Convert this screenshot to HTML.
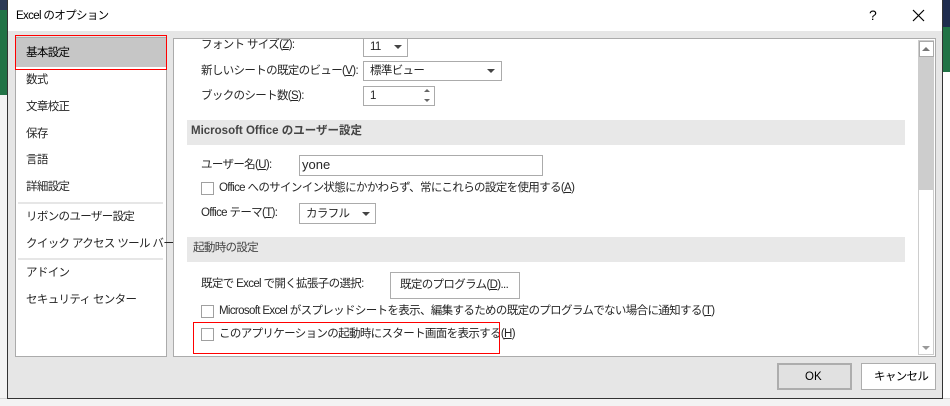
<!DOCTYPE html>
<html><head><meta charset="utf-8"><style>
*{margin:0;padding:0;box-sizing:border-box}
body{width:950px;height:406px;overflow:hidden;background:#fff;position:relative;font-family:"Liberation Sans","Noto Sans CJK JP",sans-serif;font-size:11.5px;letter-spacing:-0.65px;color:#262626}
.a{position:absolute;white-space:nowrap}
.t{line-height:16px;top:0}
.cb{position:absolute;width:13px;height:13px;border:1px solid #a0a0a0;background:#fff}
.box{position:absolute;border:1px solid #ababab;background:#fff}
.arr{position:absolute;width:0;height:0;border-left:4px solid transparent;border-right:4px solid transparent;border-top:4px solid #444}
.r{position:absolute;background:#ff0000;z-index:5}
u{text-decoration:underline}
</style></head><body>
<div class="a" style="left:0;top:0;width:8px;height:10px;background:#2b3a55"></div>
<div class="a" style="left:0;top:10px;width:8px;height:85px;background:#217346"></div>
<div class="a" style="left:0;top:95px;width:8px;height:311px;background:#f3f3f3"></div>
<div class="a" style="left:942px;top:0;width:8px;height:27px;background:#1f2d4e"></div>
<div class="a" style="left:942px;top:27px;width:8px;height:45px;background:#217346"></div>
<div class="a" style="left:942px;top:72px;width:8px;height:334px;background:#fff"></div>
<div class="a" style="left:0;top:398px;width:950px;height:8px;background:#f3f3f3;border-top:1px solid #d4d4d4"></div>
<div class="a" style="left:7px;top:0;width:936px;height:399px;border:1px solid #333;border-top:none;background:#e6e6e6"></div>
<div class="a" style="left:8px;top:0;width:934px;height:31px;background:#fff"></div>
<div class="a t" style="left:16px;top:8px;color:#000">Excel のオプション</div>
<div class="a t" style="left:869px;top:7px;font-size:14px;color:#000">?</div>
<svg class="a" style="left:912px;top:9px" width="13" height="13"><path d="M1 1L12 12M12 1L1 12" stroke="#000" stroke-width="1.2"/></svg>
<div class="box" style="left:15px;top:37px;width:152px;height:320px"></div>
<div class="a" style="left:16px;top:38px;width:150px;height:29px;background:#c6c6c6"></div>
<div class="r" style="left:15px;top:35px;width:152px;height:1px"></div>
<div class="r" style="left:15px;top:69px;width:152px;height:1px"></div>
<div class="r" style="left:15px;top:35px;width:1px;height:35px"></div>
<div class="r" style="left:166px;top:35px;width:1px;height:35px"></div>
<div class="a t" style="left:26px;top:45px;color:#000">基本設定</div>
<div class="a t" style="left:26px;top:72px">数式</div>
<div class="a t" style="left:26px;top:99px">文章校正</div>
<div class="a t" style="left:26px;top:126px">保存</div>
<div class="a t" style="left:26px;top:152px">言語</div>
<div class="a t" style="left:26px;top:179px">詳細設定</div>
<div class="a" style="left:18px;top:202px;width:145px;height:2px;background:#e6e6e6"></div>
<div class="a t" style="left:26px;top:209px">リボンのユーザー設定</div>
<div class="a t" style="left:26px;top:236px">クイック アクセス ツール バー</div>
<div class="a" style="left:18px;top:258px;width:145px;height:2px;background:#e6e6e6"></div>
<div class="a t" style="left:26px;top:265px">アドイン</div>
<div class="a t" style="left:26px;top:292px">セキュリティ センター</div>
<div class="box" style="left:173px;top:38px;width:763px;height:319px"></div>
<div class="a t" style="left:201px;top:37px">フォント サイズ(<u>Z</u>):</div>
<div class="box" style="left:363px;top:38px;width:45px;height:19px"></div>
<div class="a t" style="left:370px;top:39px">11</div>
<div class="arr" style="left:394px;top:45px"></div>
<div class="a t" style="left:201px;top:63px">新しいシートの既定のビュー(<u>V</u>):</div>
<div class="box" style="left:363px;top:61px;width:139px;height:20px"></div>
<div class="a t" style="left:370px;top:63px">標準ビュー</div>
<div class="arr" style="left:487px;top:69px"></div>
<div class="a t" style="left:201px;top:88px">ブックのシート数(<u>S</u>):</div>
<div class="box" style="left:363px;top:86px;width:72px;height:20px"></div>
<div class="a t" style="left:370px;top:88px">1</div>
<div class="a" style="left:424px;top:89px;border-left:3px solid transparent;border-right:3px solid transparent;border-bottom:3px solid #666"></div>
<div class="a" style="left:424px;top:99px;border-left:3px solid transparent;border-right:3px solid transparent;border-top:3px solid #666"></div>
<div class="a" style="left:187px;top:120px;width:718px;height:25px;background:#e8e8e8"></div>
<div class="a t" style="left:191px;top:123px;font-weight:bold;color:#444;letter-spacing:0">Microsoft Office のユーザー設定</div>
<div class="a t" style="left:201px;top:157px">ユーザー名(<u>U</u>):</div>
<div class="box" style="left:299px;top:155px;width:244px;height:21px"></div>
<div class="a t" style="left:302px;top:157px;font-size:13px;letter-spacing:0">yone</div>
<div class="cb" style="left:201px;top:182px"></div>
<div class="a t" style="left:219px;top:180px">Office へのサインイン状態にかかわらず、常にこれらの設定を使用する(<u>A</u>)</div>
<div class="a t" style="left:201px;top:205px">Office テーマ(<u>T</u>):</div>
<div class="box" style="left:299px;top:203px;width:77px;height:21px"></div>
<div class="a t" style="left:306px;top:206px">カラフル</div>
<div class="arr" style="left:362px;top:212px"></div>
<div class="a" style="left:187px;top:237px;width:718px;height:25px;background:#e8e8e8"></div>
<div class="a t" style="left:193px;top:240px;color:#444">起動時の設定</div>
<div class="a t" style="left:201px;top:276px">既定で Excel で開く拡張子の選択:</div>
<div class="box" style="left:390px;top:272px;width:130px;height:27px;border-color:#adadad;background:#fff"></div>
<div class="a t" style="left:400px;top:277px">既定のプログラム(<u>D</u>)...</div>
<div class="cb" style="left:201px;top:305px"></div>
<div class="a t" style="left:219px;top:303px">Microsoft Excel がスプレッドシートを表示、編集するための既定のプログラムでない場合に通知する(<u>T</u>)</div>
<div class="r" style="left:193px;top:322px;width:307px;height:1px"></div>
<div class="r" style="left:193px;top:353px;width:307px;height:1px"></div>
<div class="r" style="left:193px;top:322px;width:1px;height:32px"></div>
<div class="r" style="left:499px;top:322px;width:1px;height:32px"></div>
<div class="cb" style="left:201px;top:328px"></div>
<div class="a t" style="left:219px;top:326px">このアプリケーションの起動時にスタート画面を表示する(<u>H</u>)</div>
<div class="a" style="left:918px;top:40px;width:16px;height:315px;background:#fff;border:1px solid #cdcdcd"></div>
<div class="a" style="left:918px;top:56px;width:16px;height:134px;background:#cdcdcd"></div>
<div class="a" style="left:919px;top:41px;width:15px;height:16px;background:#fff;border:1px solid #aaa"></div>
<div class="a" style="left:922px;top:47px;border-left:4px solid transparent;border-right:4px solid transparent;border-bottom:4px solid #777"></div>
<div class="a" style="left:922px;top:346px;border-left:4px solid transparent;border-right:4px solid transparent;border-top:4px solid #999"></div>
<div class="a" style="left:777px;top:363px;width:75px;height:27px;background:#e1e1e1;border:2px solid #adadad"></div>
<div class="a t" style="left:805px;top:369px;color:#000;letter-spacing:0">OK</div>
<div class="a" style="left:861px;top:363px;width:75px;height:27px;background:#fff;border:1px solid #adadad"></div>
<div class="a t" style="left:874px;top:369px;color:#000">キャンセル</div>
</body></html>
